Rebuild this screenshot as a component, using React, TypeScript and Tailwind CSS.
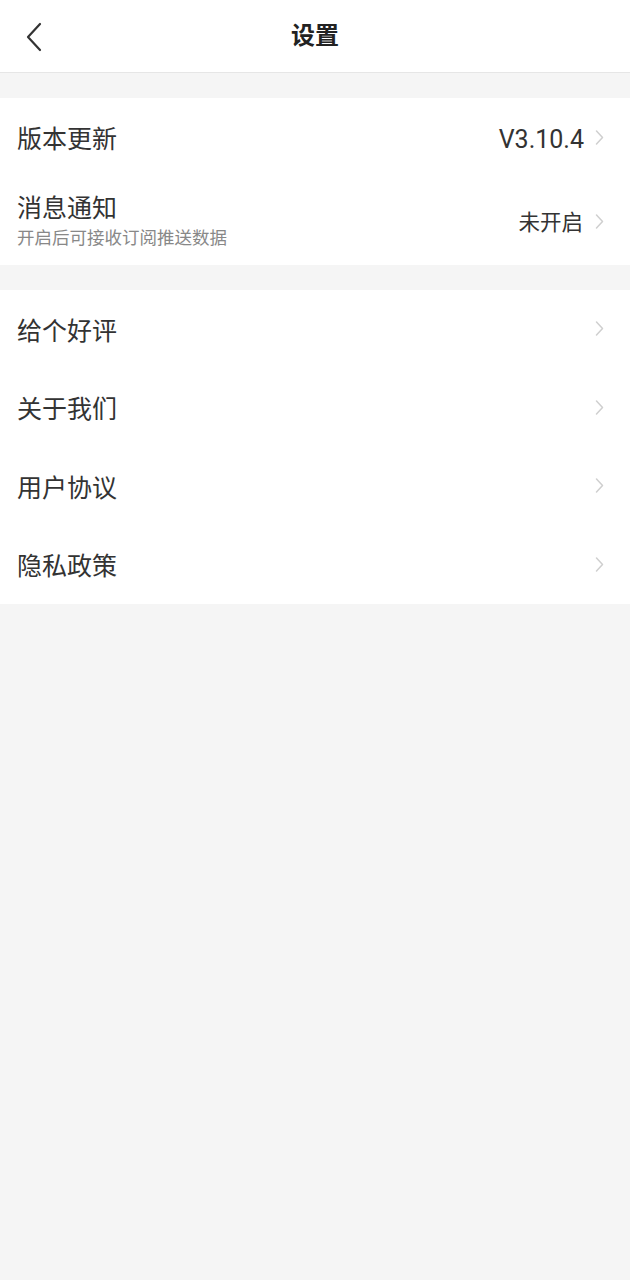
import React from 'react';

const font = { fontFamily: 'Roboto, "Noto Sans CJK SC", "Noto Sans", sans-serif' };

const Chevron = () => (
  <svg width="12" height="18" viewBox="0 0 12 18" fill="none" className="shrink-0 -mt-[6px]">
    <path d="M3.5 3l6 6.5-6 6.5" stroke="#cfcfcf" strokeWidth="1.5" strokeLinecap="round" strokeLinejoin="round" />
  </svg>
);

const Row = ({ label }: { label: string }) => (
  <div className="h-[78.5px] pt-[4px] flex items-center justify-between pl-[17px] pr-[25px]">
    <span className="text-[25px] text-[#333]">{label}</span>
    <Chevron />
  </div>
);

export default function App() {
  return (
    <div className="min-h-[1280px] bg-[#f5f5f5]" style={font}>
      {/* Header */}
      <div className="relative h-[73px] bg-white border-b border-[#e6e6e6] flex items-center justify-center">
        <button className="absolute left-[20px] top-[17px] p-1">
          <svg width="20" height="32" viewBox="0 0 20 32" fill="none">
            <path d="M16 3L4 16l12 13" stroke="#333" strokeWidth="2.2" strokeLinecap="round" strokeLinejoin="round" />
          </svg>
        </button>
        <h1 className="text-[24px] font-bold text-[#222]">设置</h1>
      </div>

      {/* Group 1 */}
      <div className="mt-[25px] bg-white">
        <div className="h-[80px] pt-[4px] flex items-center justify-between pl-[17px] pr-[25px]">
          <span className="text-[25px] text-[#333]">版本更新</span>
          <div className="flex items-center gap-[9px]">
            <span className="text-[25px] text-[#333]">V3.10.4</span>
            <Chevron />
          </div>
        </div>
        <div className="h-[87px] flex items-center justify-between pl-[17px] pr-[25px]">
          <div className="flex flex-col -mt-[2px]">
            <span className="text-[25px] leading-[34px] text-[#333]">消息通知</span>
            <span className="text-[17.5px] leading-[24px] text-[#888]">开启后可接收订阅推送数据</span>
          </div>
          <div className="flex items-center gap-[10px] pt-[4px]">
            <span className="text-[21.5px] text-[#333]">未开启</span>
            <Chevron />
          </div>
        </div>
      </div>

      {/* Group 2 */}
      <div className="mt-[25px] bg-white">
        {['给个好评', '关于我们', '用户协议', '隐私政策'].map((l) => (
          <Row key={l} label={l} />
        ))}
      </div>
    </div>
  );
}
